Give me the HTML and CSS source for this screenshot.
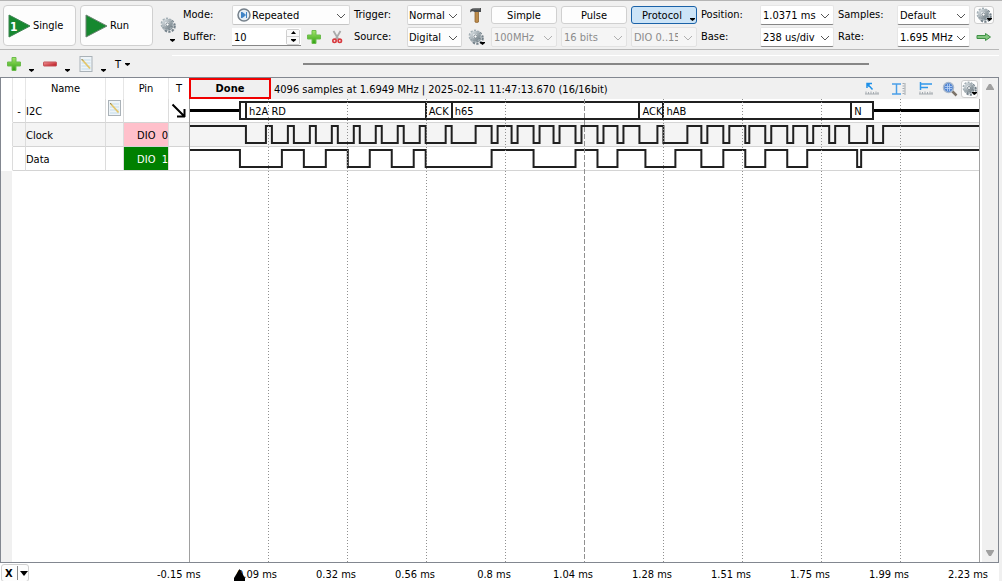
FILE: index.html
```html
<!DOCTYPE html>
<html lang="en">
<head>
<meta charset="utf-8">
<title>Logic Analyzer</title>
<link rel="stylesheet" href="styles.css">
</head>
<body>
<svg class="defs" aria-hidden="true">
  <defs>
    <linearGradient id="green" x1="0" y1="0" x2="0" y2="1"><stop offset="0" stop-color="#a4e66a"/><stop offset="1" stop-color="#2fa012"/></linearGradient>
    <linearGradient id="red" x1="0" y1="0" x2="1" y2="1"><stop offset="0" stop-color="#f39a9a"/><stop offset="1" stop-color="#b80c16"/></linearGradient>
    <linearGradient id="steel" x1="0" y1="0" x2="1" y2="1"><stop offset="0" stop-color="#d3dade"/><stop offset="1" stop-color="#7b878e"/></linearGradient>
    <symbol id="chevron" viewBox="0 0 10 6"><path d="M1 1l4 4 4-4" fill="none" stroke="currentColor"/></symbol>
    <symbol id="down" viewBox="0 0 5 3"><path d="M0 0h5v1L2.500 3 0 1z" fill="#000"/></symbol>
    <symbol id="plus" viewBox="0 0 16 16"><path d="M6 1.500h4v4.500h4.500v4H10v4.500H6V10H1.500V6H6z" fill="url(#green)" stroke="#6cbc4e" stroke-linejoin="round"/></symbol>
    <symbol id="minus" viewBox="0 0 16 16"><rect x="1.500" y="6" width="13" height="4" rx=".5" fill="url(#red)" stroke="#c4545a"/></symbol>
    <symbol id="gear" viewBox="0 0 16 16">
      <circle cx="9" cy="9" r="5.700" fill="none" stroke="#74818a" stroke-width="2.200" stroke-dasharray="2.300 1.280"/>
      <circle cx="8.500" cy="8.500" r="4.800" fill="#7b878f"/>
      <circle cx="7" cy="7" r="5.300" fill="none" stroke="#a3afb5" stroke-width="2.200" stroke-dasharray="2.100 1.230"/>
      <circle cx="7" cy="7" r="3.600" fill="#eef1f3" stroke="url(#steel)" stroke-width="2.600"/>
      <circle cx="7.500" cy="7.500" r="1.600" fill="#fff" stroke="#76838b"/>
    </symbol>
    <symbol id="note" viewBox="0 0 13 16">
      <rect x=".5" y=".5" width="12" height="15" fill="#eef4f8" stroke="#aab2b8"/>
      <path d="M2 4h9M2 7h9M2 10h9M2 13h9" stroke="#c3dceb"/>
      <path d="M2.500 3.500l8 9" stroke="#e3c66a" stroke-width="1.800"/><path d="M2 3l1.500 1.500" stroke="#8a8060"/>
    </symbol>
    <symbol id="scissors" viewBox="0 0 14 16">
      <path d="M3.500 2l5 8.500M10.500 2l-5 8.500" stroke="#aaa" stroke-width="1.800" fill="none"/>
      <circle cx="4.500" cy="11.800" r="1.700" fill="none" stroke="#d8383d" stroke-width="1.600"/><circle cx="9.800" cy="11.800" r="1.700" fill="none" stroke="#d8383d" stroke-width="1.600"/>
    </symbol>
    <symbol id="hammer" viewBox="0 0 14 18">
      <path d="M6 5h3.500v11q-1.700 1-3.500 0z" fill="#bd8c4b" stroke="#8f6530" stroke-width=".8"/>
      <path d="M1.500 3.500Q3 2 6 2h6v4H5.500Q3.500 4.500 1 6.500z" fill="#4b4d4f"/><path d="M4 2.800h7" stroke="#8a8c8e"/>
    </symbol>
    <symbol id="arrow" viewBox="0 0 16 10"><path d="M1 3.500h8.500V1.500l5 3.500-5 3.500V6.500H1z" fill="#84c680" stroke="#3f9146" stroke-width="1"/></symbol>
  </defs>
</svg>

<main class="app">
  <div class="toolbar">
    <button class="big" type="button"><svg width="23" height="24" viewBox="0 0 23 24"><path d="M1 1l21 11L1 23z" fill="#16882f" stroke="#3c8350"/><text class="one" x="2" y="17">1</text></svg>Single</button>
    <button class="big" type="button"><svg width="23" height="24" viewBox="0 0 23 24"><path d="M1 1l21 11L1 23z" fill="#16882f" stroke="#6b8472"/></svg>Run</button>
    <button class="flat options" type="button" aria-label="Run options"><svg width="16" height="16"><use href="#gear"/></svg><svg class="tick" width="5" height="3"><use href="#down"/></svg></button>
    <div class="controls">
      <label for="mode">Mode:</label>
      <span class="combo wide"><svg class="lead" width="14" height="14" viewBox="0 0 14 14"><circle cx="7" cy="7" r="6" fill="#e4edf5" stroke="#75808a" stroke-width="1.500"/><path d="M4.500 4v6M9.500 4v6M5.500 4.500L8.500 7l-3 2.500z" fill="#3e83c6" stroke="#3e83c6"/></svg><select id="mode"><option>Repeated</option></select><svg class="chev" width="10" height="6"><use href="#chevron"/></svg></span>
      <label for="trigger">Trigger:</label>
      <span class="combo"><select id="trigger"><option>Normal</option></select><svg class="chev" width="10" height="6"><use href="#chevron"/></svg></span>
      <button class="flat" type="button" aria-label="Tools"><svg width="14" height="18"><use href="#hammer"/></svg></button>
      <button class="push" type="button">Simple</button>
      <button class="push" type="button">Pulse</button>
      <button class="push active" type="button">Protocol<svg class="tick" width="5" height="3"><use href="#down"/></svg></button>
      <label for="position">Position:</label>
      <span class="combo edit"><select id="position"><option>1.0371 ms</option></select><svg class="chev" width="10" height="6"><use href="#chevron"/></svg></span>
      <label for="samples">Samples:</label>
      <span class="combo edit"><select id="samples"><option>Default</option></select><svg class="chev" width="10" height="6"><use href="#chevron"/></svg></span>
      <button class="framed" type="button" aria-label="Sampling options"><svg width="16" height="16"><use href="#gear"/></svg><svg class="tick" width="5" height="3"><use href="#down"/></svg></button>

      <label for="buffer">Buffer:</label>
      <span class="buffer"><span class="spin"><input id="buffer" type="text" value="10"><span class="steps"><button type="button" aria-label="Increase"><svg width="5" height="3" viewBox="0 0 5 3"><path d="M0 3h5L2.500 0z"/></svg></button><button type="button" aria-label="Decrease"><svg width="5" height="3"><use href="#down"/></svg></button></span></span><button class="flat" type="button" aria-label="Add buffer"><svg width="16" height="16"><use href="#plus"/></svg></button><button class="flat" type="button" aria-label="Cut buffer"><svg width="14" height="16"><use href="#scissors"/></svg></button></span>
      <label for="source">Source:</label>
      <span class="combo"><select id="source"><option>Digital</option></select><svg class="chev" width="10" height="6"><use href="#chevron"/></svg></span>
      <button class="flat" type="button" aria-label="Source options"><svg width="16" height="16"><use href="#gear"/></svg><svg class="tick" width="5" height="3"><use href="#down"/></svg></button>
      <span class="combo off"><select disabled aria-label="Clock"><option>100MHz</option></select><svg class="chev" width="10" height="6"><use href="#chevron"/></svg></span>
      <span class="combo off"><select disabled aria-label="Width"><option>16 bits</option></select><svg class="chev" width="10" height="6"><use href="#chevron"/></svg></span>
      <span class="combo off"><select disabled aria-label="Inputs"><option>DIO 0..15</option></select><svg class="chev" width="10" height="6"><use href="#chevron"/></svg></span>
      <label for="base">Base:</label>
      <span class="combo edit"><select id="base"><option>238 us/div</option></select><svg class="chev" width="10" height="6"><use href="#chevron"/></svg></span>
      <label for="rate">Rate:</label>
      <span class="combo edit"><select id="rate"><option>1.695 MHz</option></select><svg class="chev" width="10" height="6"><use href="#chevron"/></svg></span>
      <button class="flat" type="button" aria-label="Next"><svg width="16" height="10"><use href="#arrow"/></svg></button>
    </div>
  </div>

  <div class="channelbar">
    <div class="tools">
      <button class="flat" type="button" aria-label="Add channel"><svg width="16" height="16"><use href="#plus"/></svg><svg class="tick" width="5" height="3"><use href="#down"/></svg></button>
      <button class="flat" type="button" aria-label="Remove channel"><svg width="16" height="16"><use href="#minus"/></svg><svg class="tick" width="5" height="3"><use href="#down"/></svg></button>
      <button class="flat" type="button" aria-label="Edit channel"><svg width="16" height="16"><use href="#note"/></svg><svg class="tick" width="5" height="3"><use href="#down"/></svg></button>
      <button class="flat letter" type="button">T<svg width="5" height="3"><use href="#down"/></svg></button>
    </div>
    <div class="overview"><div class="span"></div></div>
  </div>

  <section class="frame">
    <div class="channels">
      <table>
        <colgroup><col class="c-edge"><col class="c-fold"><col class="c-name"><col class="c-edit"><col class="c-pin"><col class="c-trig"></colgroup>
        <thead><tr><th></th><th></th><th>Name</th><th></th><th>Pin</th><th>T</th></tr></thead>
        <tbody>
          <tr><td></td><td class="mid">-</td><td>I2C</td><td class="mid top"><svg width="13" height="16"><use href="#note"/></svg></td><td></td><td class="mid"><svg width="16" height="16" viewBox="0 0 16 16"><path d="M1.500 1.500L13 13M13.500 6v8M6 13.500h8" fill="none" stroke="#000" stroke-width="2"/></svg></td></tr>
          <tr class="alt"><td></td><td></td><td>Clock</td><td></td><td class="pin pink">DIO&nbsp; 0</td><td></td></tr>
          <tr><td></td><td></td><td>Data</td><td></td><td class="pin green">DIO&nbsp; 1</td><td></td></tr>
        </tbody>
      </table>
      <div class="gutter"></div>
    </div>

    <div class="view">
      <div class="status">
        <strong class="done">Done</strong>
        <span class="info">4096 samples at 1.6949 MHz | 2025-02-11 11:47:13.670 (16/16bit)</span>
        <button class="flat" type="button" aria-label="Cursor"><svg width="16" height="14" viewBox="0 0 16 14"><path d="M3 6V1.500h5M3 1.500l5.500 6M5 2v3" fill="none" stroke="#1e90e8" stroke-width="1.500"/><path d="M2 12V9.500M4.500 12v-2M7 12v-2.500M9.500 12v-2M12 12v-2.500M14 12v-2M1 12h14" stroke="#a5abb0" fill="none"/></svg></button>
        <button class="flat" type="button" aria-label="Vertical measure"><svg width="16" height="14" viewBox="0 0 16 14"><path d="M1 2h9M1 12h9M5.500 2v10" fill="none" stroke="#4a9fe8" stroke-width="1.500"/><path d="M14 1v12M11.500 1.500h2M11.500 4h2M11.500 6.500h2M11.500 9h2M11.500 11.500h2" stroke="#a5abb0" fill="none"/></svg></button>
        <button class="flat" type="button" aria-label="Horizontal measure"><svg width="16" height="14" viewBox="0 0 16 14"><path d="M2.500 0v8M3 2h11M3 5.500h7" fill="none" stroke="#2f97ea" stroke-width="1.500"/><path d="M2 12V9.500M4.500 12v-2M7 12v-2.500M9.500 12v-2M12 12v-2.500M14 12v-2M1 12h14" stroke="#a5abb0" fill="none"/></svg></button>
        <button class="flat" type="button" aria-label="Zoom"><svg width="16" height="16" viewBox="0 0 16 16"><path d="M10 10l4.500 4.500" stroke="#7c7369" stroke-width="2.500"/><circle cx="6.500" cy="6.500" r="5" fill="#4f84d4" stroke="#a8b8cc" stroke-width="1.500"/><path d="M5.500 3v7M7.500 3v7M3 5.500h7M3 7.500h7" stroke="#b9d2f5" stroke-width=".8"/></svg></button>
        <button class="framed" type="button" aria-label="View options"><svg width="15" height="15"><use href="#gear"/></svg><svg class="tick" width="5" height="3"><use href="#down"/></svg></button>
      </div>
      <div class="plot">
        <div class="rows">
          <div class="row bus">
            <span class="idle"></span><span class="word"></span><span class="word">h2A RD</span><span class="word">ACK</span><span class="word">h65</span><span class="word">ACK</span><span class="word">hAB</span><span class="word">N</span><span class="idle"></span>
          </div>
          <div class="row alt"><svg viewBox="190 123 790 24" preserveAspectRatio="none"><path class="wave" d="M190 126H246V143H266V126H272V143H288V126H294V143H310V126H316V143H332V126H338V143H354V126H360V143H376V126H382V143H398V126H404V143H420V126H426V143H446V126H452V143H476V126H492V143H498V126H512V143H518V126H534V143H540V126H554V143H560V126H576V143H582V126H598V143H604V126H618V143H624V126H640V143H658V126H664V143H688V126H702V143H708V126H724V143H730V126H746V143H750V126H766V143H772V126H788V143H794V126H808V143H814V126H830V143H836V126H850V143H868V126H874V143H884V126H980"/></svg></div>
          <div class="row"><svg viewBox="190 147 790 24" preserveAspectRatio="none"><path class="wave" d="M190 150H240V167H282V150H304V167H326V150H348V167H370V150H392V167H414V150H426V167H492V150H534V167H576V150H598V167H618V150H646V167H676V150H702V167H724V150H746V167H766V150H788V167H808V150H858V167H862V150H980"/></svg></div>
        </div>
        <svg class="grid" aria-hidden="true"><line x1="10%" x2="10%" y2="100%"/><line x1="20%" x2="20%" y2="100%"/><line x1="30%" x2="30%" y2="100%"/><line x1="40%" x2="40%" y2="100%"/><line class="center" x1="50%" x2="50%" y2="100%"/><line x1="60%" x2="60%" y2="100%"/><line x1="70%" x2="70%" y2="100%"/><line x1="80%" x2="80%" y2="100%"/><line x1="90%" x2="90%" y2="100%"/></svg>
      </div>
    </div>
    <div class="scroll">
      <svg width="8" height="6" viewBox="0 0 8 6"><path d="M0 6V5l3-5h2l3 5v1z"/></svg>
      <svg width="8" height="6" viewBox="0 0 8 6"><path d="M0 0v1l3 5h2l3-5V0z"/></svg>
    </div>
  </section>

  <footer class="axis">
    <button class="unit" type="button"><b>X</b><i></i><svg width="8" height="5" viewBox="0 0 8 5"><path d="M0 0h8L4 5z"/></svg></button>
    <div class="times"><span>-0.15 ms</span><span class="marked">0.09 ms<svg class="marker" width="11" height="12" viewBox="0 0 11 12"><path d="M5.500 0L11 9v3H0V9z"/></svg></span><span>0.32 ms</span><span>0.56 ms</span><span>0.8 ms</span><span>1.04 ms</span><span>1.28 ms</span><span>1.51 ms</span><span>1.75 ms</span><span>1.99 ms</span><span>2.23 ms</span></div>
  </footer>
</main>
</body>
</html>
```
FILE: styles.css
```css
* { box-sizing: border-box; }
body { margin: 0; background: #f0f0f0; color: #000; }
body, button, select, input { font-family: "DejaVu Sans Condensed", "DejaVu Sans", sans-serif; font-size: 11px; font-stretch: condensed; }
.defs { position: absolute; width: 0; height: 0; }
svg { display: block; flex: none; }
button { padding: 0; color: inherit; }
.app { display: flex; flex-direction: column; height: 100vh; min-height: 300px; padding-right: 3px; border-top: 1px solid #b4b4b4; overflow: hidden; }

.toolbar { display: flex; align-items: flex-start; height: 49px; padding: 4px 0 0 3px; border-bottom: 1px solid #b8b8b8; gap: 4px; }
.big { display: flex; align-items: center; gap: 2px; width: 73px; height: 41px; padding-left: 4px; background: #fdfdfd; border: 1px solid #d0d0d0; border-radius: 4px; }
.one { font-family: "DejaVu Sans", sans-serif; font-size: 12px; font-weight: bold; fill: #fff; }
.flat { display: flex; align-items: center; justify-content: center; position: relative; background: none; border: 0; }
.tick { position: absolute; right: 1px; bottom: 2px; }
.options { align-items: flex-start; width: 22px; height: 38px; padding-top: 12px; }
.options .tick { right: 4px; bottom: 1px; }
.controls { display: grid; grid-template-columns: 49px 122px 53px 59px 25px 70px 70px 70px 59px 78px 59px 77px 22px; grid-auto-rows: 20px; row-gap: 2px; align-items: center; }
.controls label { height: 17px; line-height: 15px; }
.controls .flat { justify-self: start; width: 20px; height: 20px; }
.combo { position: relative; display: flex; align-items: center; height: 20px; margin-right: 4px; background: #fdfdfd; border: 1px solid #d8d8d8; border-bottom-color: #c4c4c4; border-radius: 2px; }
.combo select { appearance: none; flex: 1; width: 100%; min-width: 0; height: 18px; padding: 1px 14px 0 1px; border: 0; background: none; color: inherit; }
.combo .chev { position: absolute; right: 3px; top: 7px; color: #555; pointer-events: none; }
.lead { margin-left: 4px; }
.edit { background: #fff; border-color: #e6e6e6; border-bottom-color: #868686; }
.edit select { padding-left: 2px; }
.off { background: #f5f5f5; border-color: #e2e2e2; color: #9a9a9a; }
.off select { opacity: 1; padding-left: 2px; padding-right: 18px; color: #8c8c8c; }
.off .chev { color: #b0b0b0; }
.push { position: relative; height: 18px; margin-right: 4px; background: #fdfdfd; border: 1px solid #d0d0d0; border-radius: 3px; }
.active { background: #cce4f7; border-color: #1a62a8; padding-right: 4px; }
.framed { position: relative; display: flex; align-items: center; justify-content: center; width: 20px; height: 18px; background: #fdfdfd; border: 1px solid #cfcfcf; border-radius: 3px; }
.buffer { display: flex; align-items: center; gap: 3px; }
.spin { display: flex; align-items: center; width: 69px; height: 18px; background: #fff; border-bottom: 1px solid #868686; }
.spin input { flex: 1; min-width: 0; height: 16px; padding: 1px 2px 0; border: 0; background: none; }
.steps { display: grid; width: 14px; height: 16px; margin-right: 1px; border: 1px solid #d0d0d0; border-radius: 2px; }
.steps button { display: flex; align-items: center; justify-content: center; border: 0; background: #fafafa; }
.steps button + button { border-top: 1px solid #d0d0d0; }

.channelbar { display: flex; height: 27px; padding-top: 5px; }
.tools { display: flex; width: 172px; padding: 1px 0 0 6px; }
.tools .flat { justify-content: flex-start; width: 36px; height: 16px; }
.tools .tick { right: 8px; bottom: 0; }
.tools .letter { padding-left: 1px; gap: 4px; }
.overview { flex: 1; padding: 7px 130px 0 131px; border-top: 1px solid #fff; }
.span { height: 2px; background: #868686; }

.frame { flex: 1; display: flex; min-height: 0; border: 1px solid #828790; background: #fff; }
.channels { display: flex; flex-direction: column; width: 188px; }
table { width: 188px; table-layout: fixed; border-collapse: separate; border-spacing: 0; }
.c-edge { width: 12px; } .c-fold { width: 13px; } .c-name { width: 80px; } .c-edit { width: 18px; } .c-pin { width: 45px; } .c-trig { width: 20px; }
th { height: 21px; padding: 1px 0; font-weight: normal; border-right: 1px solid #e6e6e6; }
td { height: 24px; padding: 1px 0 0; border-right: 1px solid #dcdcdc; border-bottom: 1px solid #d4d4d4; }
td:first-child { border-bottom-color: #fff; }
th:last-child, td:last-child { border-right: 0; }
.alt { background: #f4f4f4; }
.alt td:first-child { background: #fff; }
.mid { text-align: center; }
.mid svg { margin: 0 auto; }
.top { vertical-align: top; }
.pin { text-align: right; }
.pink { background: #ffc0cb; }
.green { background: #008000; color: #fff; }
.gutter { flex: 1; width: 11px; background: #f0f0f0; }

.view { flex: 1; min-width: 0; display: flex; flex-direction: column; }
.status { display: flex; align-items: center; height: 21px; background: #f0f0f0; }
.done { width: 82px; height: 21px; line-height: 18px; text-align: center; border: 2px solid #f00000; }
.info { flex: 1; padding: 1px 0 0 3px; white-space: nowrap; }
.status .flat { width: 27px; height: 18px; }
.status .flat:nth-last-child(2) { width: 22px; }
.status .framed { width: 17px; margin-right: 2px; }
.status .tick { right: 0; }
.plot { flex: 1; display: grid; min-height: 0; border: solid #a0a0a0; border-width: 0 1px; }
.rows, .grid { grid-area: 1 / 1; width: 100%; }
.grid { height: 100%; }
.grid line { stroke: #909090; stroke-width: 1; stroke-dasharray: 1 2; shape-rendering: crispEdges; }
.grid .center { stroke-dasharray: 5 2; }
.row { height: 24px; border-bottom: 1px solid #d4d4d4; }
.row svg { width: 100%; height: 24px; }
.wave { fill: none; stroke: #202020; stroke-width: 2; vector-effect: non-scaling-stroke; }
.bus { display: grid; grid-template-columns: 49fr 6fr 180fr 26fr 188fr 24fr 188fr 24fr 105fr; align-items: center; }
.idle { height: 3px; background: #000; }
.word { min-width: 0; height: 19px; padding-left: 2px; line-height: 17px; border: solid #202020; border-width: 2px 0 2px 2px; white-space: nowrap; }
.word:nth-child(8) { border-right-width: 2px; }
.scroll { display: flex; flex-direction: column; justify-content: space-between; align-items: center; width: 16px; margin-left: 2px; padding: 6px 0; background: #f0f0f0; fill: #a0a0a0; }

.axis { display: flex; height: 18px; background: #fff; }
.unit { display: flex; align-items: center; gap: 4px; width: 28px; height: 18px; margin: 1px 128px 0 1px; padding-left: 3px; background: #fdfdfd; border: 1px solid #d0d0d0; border-radius: 3px; }
.unit i { width: 1px; height: 14px; background: #888; }
.unit svg { margin-left: -2px; }
.times { flex: 1; display: flex; justify-content: space-between; padding: 4px 10px 0 0; line-height: 15px; }
.times span { width: 42px; white-space: nowrap; text-align: center; }
.marked { position: relative; }
.marker { position: absolute; left: -2px; top: 2px; }
```
